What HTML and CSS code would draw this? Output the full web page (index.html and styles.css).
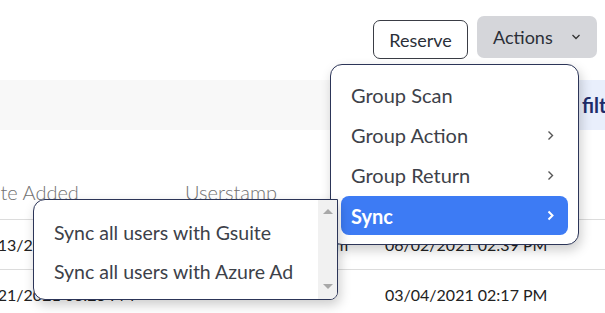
FILE: index.html
```html
<!DOCTYPE html>
<html lang="en">
<head>
  <meta charset="UTF-8">
  <title>Assets</title>
  <link rel="stylesheet" href="styles.css">
</head>
<body>
  <div class="page">
    <div class="toolbar">
      <button class="btn btn-outline">Reserve</button>
      <button class="btn btn-gray">Actions
        <svg class="caret" width="10" height="6" viewBox="0 0 10 6"><path d="M1.5 1l3.5 3.5 3.5-3.5" fill="none" stroke="#333" stroke-width="1.3"/></svg>
      </button>
    </div>

    <div class="filter-bar">
      <div class="filter-pill">filters</div>
    </div>

    <div class="table-wrap">
      <div class="grid">
        <div class="row head">
          <div>Date Added</div>
          <div>Userstamp</div>
          <div>Date Modified</div>
        </div>
        <div class="row">
          <div class="first">06/13/2021 10:14 AM</div>
          <div>ravi.kumar@admin.com</div>
          <div>06/02/2021 02:39 PM</div>
        </div>
        <div class="row">
          <div class="first">03/21/2021 03:25 PM</div>
          <div></div>
          <div>03/04/2021 02:17 PM</div>
        </div>
      </div>
    </div>

    <!-- Actions dropdown -->
    <div class="menu">
      <div class="menu-item">Group Scan</div>
      <div class="menu-item">Group Action
        <svg class="chev" width="7" height="11" viewBox="0 0 7 11"><path d="M1.5 1.5l4 4-4 4" fill="none" stroke="currentColor" stroke-width="1.4"/></svg>
      </div>
      <div class="menu-item">Group Return
        <svg class="chev" width="7" height="11" viewBox="0 0 7 11"><path d="M1.5 1.5l4 4-4 4" fill="none" stroke="currentColor" stroke-width="1.4"/></svg>
      </div>
      <div class="menu-item active">Sync
        <svg class="chev" width="7" height="11" viewBox="0 0 7 11"><path d="M1.5 1.5l4 4-4 4" fill="none" stroke="currentColor" stroke-width="2"/></svg>
      </div>
    </div>

    <!-- Sync submenu -->
    <div class="submenu">
      <div class="sub-list">
        <div class="sub-item">Sync all users with Gsuite</div>
        <div class="sub-item">Sync all users with Azure Ad</div>
      </div>
      <div class="scrollbar">
        <span class="arrow up"></span>
        <span class="arrow down"></span>
      </div>
    </div>
  </div>
</body>
</html>
```

FILE: styles.css
```css
body {
  margin: 0;
  font-family: 'Lato', 'Open Sans', sans-serif;
  background: #fff;
  color: #222;
}

.page {
  position: relative;
  width: 605px;
  height: 313px;
  overflow: hidden;
}

.toolbar {
  display: flex;
  justify-content: flex-end;
  align-items: flex-start;
  gap: 9px;
  padding: 16px 8px 0 0;
  height: 64px;
  box-sizing: border-box;
}

.btn {
  font-family: inherit;
  font-size: 18px;
  border-radius: 7px;
  cursor: pointer;
  color: #2b2f38;
}

.btn-outline {
  margin-top: 4px;
  height: 39px;
  width: 95px;
  padding: 0;
  background: #fff;
  border: 1px solid #3a3d45;
}

.btn-gray {
  height: 42px;
  width: 120px;
  background: #d5d6da;
  border: none;
  display: flex;
  align-items: center;
  padding: 0 0 0 16px;
  gap: 18px;
}

.filter-bar {
  margin-top: 16px;
  height: 50px;
  background: #f8f8f8;
  display: flex;
  justify-content: flex-end;
}

.filter-pill {
  width: 23px;
  padding-left: 4px;
  overflow: hidden;
  white-space: nowrap;
  background: #e9effc;
  color: #1e2d6b;
  font-weight: 700;
  font-size: 20px;
  line-height: 50px;
}

.table-wrap {
  margin-top: 38px;
  overflow: hidden;
}

.grid {
  margin-left: -24px;
}

.row {
  display: grid;
  grid-template-columns: 209px 200px 1fr;
  align-items: center;
  height: 49px;
  border-bottom: 1px solid #dcdcdc;
  font-size: 16px;
  white-space: nowrap;
}

.row .first {
  margin-left: -4px;
}

.row.head {
  height: 52px;
  align-items: start;
  padding-top: 12px;
  box-sizing: border-box;
  color: #727272;
  font-size: 20px;
  font-weight: 300;
}

.menu {
  position: absolute;
  left: 330px;
  top: 64px;
  width: 249px;
  height: 181px;
  box-sizing: border-box;
  padding: 10px 10px 10px;
  background: #fff;
  border: 1px solid #2c3558;
  border-radius: 12px;
  box-shadow: 2px 5px 12px rgba(0, 0, 0, 0.2);
  z-index: 2;
}

.menu-item {
  display: flex;
  align-items: center;
  justify-content: space-between;
  height: 40px;
  padding: 0 14px 0 10px;
  font-size: 20px;
  color: #3d4149;
  border-radius: 8px;
}

.menu-item .chev {
  color: #555;
}

.menu-item.active {
  height: 39px;
  margin-top: 1px;
  background: #3d7bf4;
  color: #fff;
  font-weight: 700;
}

.menu-item.active .chev {
  color: #fff;
}

.submenu {
  position: absolute;
  left: 33px;
  top: 199px;
  width: 305px;
  height: 101px;
  box-sizing: border-box;
  display: flex;
  background: #fff;
  border: 1px solid #2c3558;
  border-radius: 12px 0 8px 12px;
  box-shadow: 2px 5px 12px rgba(0, 0, 0, 0.2);
  z-index: 3;
}

.sub-list {
  flex: 1;
  padding-top: 13px;
}

.sub-item {
  height: 39px;
  line-height: 39px;
  padding-left: 20px;
  font-size: 19.5px;
  color: #3d4149;
}

.scrollbar {
  width: 19px;
  background: #f1f1f1;
  display: flex;
  flex-direction: column;
  justify-content: space-between;
  align-items: center;
  padding: 9px 0 10px;
  box-sizing: border-box;
  border-bottom-right-radius: 7px;
}

.arrow {
  width: 0;
  height: 0;
  border-left: 5px solid transparent;
  border-right: 5px solid transparent;
}

.arrow.up {
  border-bottom: 5px solid #a8a8a8;
}

.arrow.down {
  border-top: 5px solid #a8a8a8;
}
```
